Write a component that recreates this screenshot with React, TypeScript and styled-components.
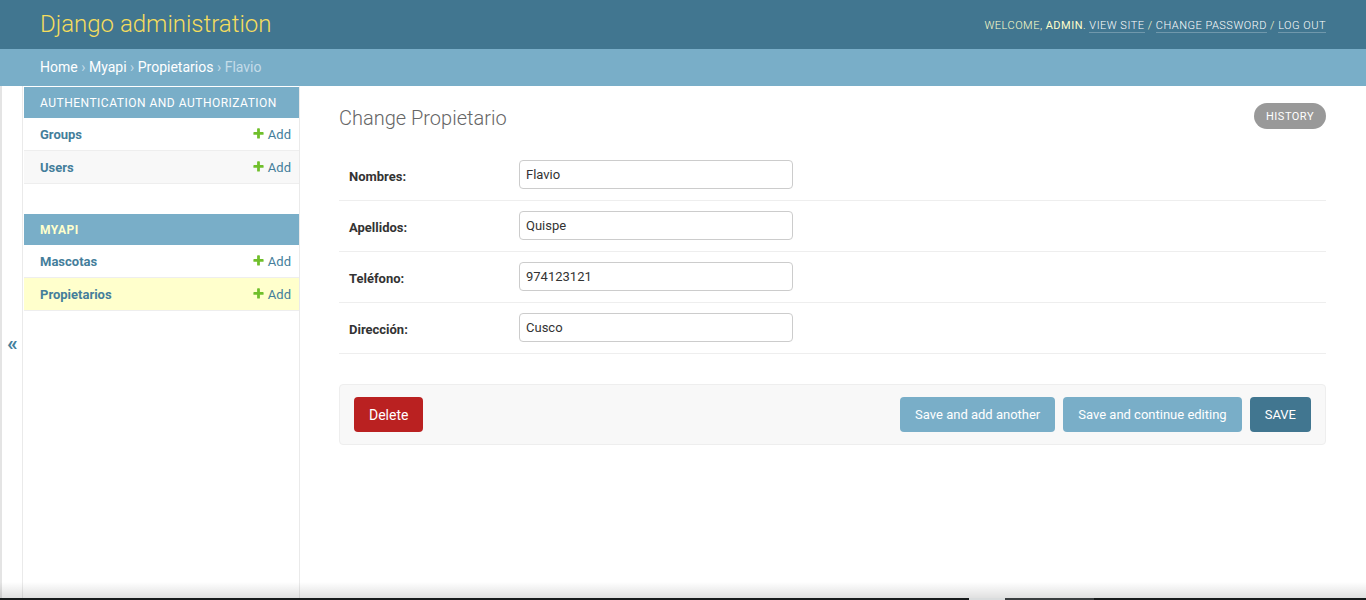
import React from 'react';
import styled, { createGlobalStyle } from 'styled-components';

const GlobalStyle = createGlobalStyle`
  html, body { margin: 0; padding: 0; height: 100%; }
  body {
    font-family: Roboto, "Liberation Sans", Arial, sans-serif;
    color: #333;
    background: #fff;
    font-size: 14px;
  }
  #root { height: 100%; }
  * { box-sizing: border-box; }
`;

const Page = styled.div`
  height: 100vh;
  display: flex;
  flex-direction: column;
  position: relative;
  overflow: hidden;
  &::after {
    content: '';
    position: absolute;
    left: 0;
    right: 0;
    bottom: 2px;
    height: 16px;
    background: linear-gradient(to bottom, rgba(0, 0, 0, 0), rgba(0, 0, 0, 0.12));
    pointer-events: none;
  }
`;

const Header = styled.header`
  flex: 0 0 49px;
  display: flex;
  align-items: center;
  justify-content: space-between;
  padding: 0 40px;
  background: #417690;
  color: #ffc;
`;

const Branding = styled.h1`
  margin: 0;
  font-weight: 300;
  font-size: 24px;
  line-height: 29px;
  color: #f5dd5d;
`;

const UserTools = styled.div`
  font-weight: 300;
  font-size: 11px;
  letter-spacing: 0.5px;
  text-transform: uppercase;
  color: #ffc;
  line-height: 14px;
  padding-top: 3px;
  strong { font-weight: 400; }
`;

const ToolLink = styled.a`
  color: #fff;
  text-decoration: none;
  border-bottom: 1px solid rgba(255, 255, 255, 0.25);
`;

const Breadcrumbs = styled.nav`
  flex: 0 0 37px;
  display: flex;
  align-items: center;
  padding: 0 40px 1px;
  background: #79aec8;
  color: #c4dce8;
  font-size: 14px;
`;

const Crumb = styled.a`
  color: #fff;
  text-decoration: none;
`;

const Sep = styled.span`
  margin: 0 3.5px;
`;

const Main = styled.div`
  flex: 1;
  display: flex;
  min-height: 0;
`;

const Toggle = styled.button`
  flex: 0 0 23px;
  width: 23px;
  border: 0;
  border-left: 2px solid #e4e4e4;
  border-right: 1px solid #eaeaea;
  background: #fff;
  color: #447e9b;
  font-family: inherit;
  font-size: 21px;
  font-weight: 700;
  padding: 2px 0 0 1px;
  display: flex;
  align-items: center;
  justify-content: center;
  cursor: pointer;
`;

const Sidebar = styled.nav`
  flex: 0 0 277px;
  padding-left: 1px;
  border-top: 1px solid transparent;
  border-right: 1px solid #eaeaea;
  background: #fff;
`;

const Module = styled.div`
  margin-bottom: 30px;
`;

const Caption = styled.div<{ $current?: boolean }>`
  height: 31px;
  display: flex;
  align-items: center;
  padding: 0 16px;
  background: #79aec8;
  color: ${(p) => (p.$current ? '#ffc' : '#fff')};
  font-weight: ${(p) => (p.$current ? 700 : 400)};
  font-size: 12px;
  letter-spacing: 0.5px;
  text-transform: uppercase;
`;

const ModelRow = styled.div<{ $bg: string }>`
  height: 33px;
  display: flex;
  align-items: center;
  justify-content: space-between;
  padding: 0 8px 0 16px;
  border-bottom: 1px solid #eee;
  background: ${(p) => p.$bg};
  font-size: 13px;
`;

const ModelName = styled.a`
  color: #447e9b;
  font-weight: 700;
  text-decoration: none;
`;

const AddLink = styled.a`
  display: flex;
  align-items: center;
  gap: 3px;
  color: #447e9b;
  text-decoration: none;
  svg { display: block; margin-top: -1px; }
`;

const Content = styled.main`
  flex: 1;
  padding: 20px 40px 20px 39px;
`;

const ContentHead = styled.div`
  display: flex;
  justify-content: space-between;
  align-items: flex-start;
  margin-bottom: 20px;
`;

const Title = styled.h1`
  margin: 0;
  font-size: 20px;
  font-weight: 300;
  line-height: 24px;
  color: #666;
`;

const HistoryLink = styled.a`
  margin-top: -3px;
  height: 26px;
  padding: 0 12px;
  display: flex;
  align-items: center;
  background: #999;
  color: #fff;
  font-size: 11px;
  letter-spacing: 0.5px;
  text-transform: uppercase;
  border-radius: 15px;
  text-decoration: none;
`;

const FormRow = styled.div`
  display: flex;
  align-items: center;
  padding: 10px 10px 11px;
  border-bottom: 1px solid #eee;
`;

const Label = styled.label`
  flex: 0 0 170px;
  padding-top: 3px;
  font-size: 13px;
  font-weight: 700;
  color: #333;
`;

const Input = styled.input`
  width: 274px;
  height: 29px;
  padding: 0 6px;
  border: 1px solid #ccc;
  border-radius: 4px;
  font-family: Roboto, "Liberation Sans", Arial, sans-serif;
  font-size: 13px;
  color: #333;
  background: #fff;
  outline: none;
`;

const SubmitRow = styled.div`
  margin-top: 30px;
  display: flex;
  align-items: center;
  gap: 8px;
  padding: 12px 14px;
  background: #f8f8f8;
  border: 1px solid #eee;
  border-radius: 4px;
`;

const Button = styled.button<{ $bg: string; $push?: boolean; $size?: number }>`
  height: 35px;
  padding: 0 15px;
  border: 0;
  border-radius: 4px;
  background: ${(p) => p.$bg};
  color: #fff;
  font-family: Roboto, "Liberation Sans", Arial, sans-serif;
  font-size: ${(p) => p.$size ?? 13}px;
  cursor: pointer;
  margin-right: ${(p) => (p.$push ? 'auto' : '0')};
`;

const BottomBar = styled.div`
  flex: 0 0 2px;
  display: flex;
  background: #171b1c;
`;

const BarSpacer = styled.div<{ $w: number; $bg: string }>`
  flex: 0 0 ${(p) => p.$w}px;
  background: ${(p) => p.$bg};
`;

const PlusIcon = () => (
  <svg width="13" height="13" viewBox="0 0 1792 1792" aria-hidden="true">
    <path
      fill="#70bf2b"
      d="M1600 796v192q0 40-28 68t-68 28h-416v416q0 40-28 68t-68 28h-192q-40 0-68-28t-28-68v-416h-416q-40 0-68-28t-28-68v-192q0-40 28-68t68-28h416v-416q0-40 28-68t68-28h192q40 0 68 28t28 68v416h416q40 0 68 28t28 68z"
    />
  </svg>
);

type Model = { name: string; bg: string };
type App_ = { caption: string; current?: boolean; models: Model[] };

const apps: App_[] = [
  {
    caption: 'Authentication and Authorization',
    models: [
      { name: 'Groups', bg: '#fff' },
      { name: 'Users', bg: '#f8f8f8' },
    ],
  },
  {
    caption: 'Myapi',
    current: true,
    models: [
      { name: 'Mascotas', bg: '#fff' },
      { name: 'Propietarios', bg: '#ffc' },
    ],
  },
];

const fields = [
  { label: 'Nombres:', value: 'Flavio' },
  { label: 'Apellidos:', value: 'Quispe' },
  { label: 'Teléfono:', value: '974123121' },
  { label: 'Dirección:', value: 'Cusco' },
];

export default function App() {
  return (
    <>
      <GlobalStyle />
      <Page>
        <Header>
          <Branding>Django administration</Branding>
          <UserTools>
            Welcome, <strong>admin</strong>. <ToolLink href="#">View site</ToolLink> /{' '}
            <ToolLink href="#">Change password</ToolLink> / <ToolLink href="#">Log out</ToolLink>
          </UserTools>
        </Header>
        <Breadcrumbs>
          <Crumb href="#">Home</Crumb>
          <Sep>›</Sep>
          <Crumb href="#">Myapi</Crumb>
          <Sep>›</Sep>
          <Crumb href="#">Propietarios</Crumb>
          <Sep>›</Sep>
          Flavio
        </Breadcrumbs>
        <Main>
          <Toggle>«</Toggle>
          <Sidebar>
            {apps.map((app) => (
              <Module key={app.caption}>
                <Caption $current={app.current}>{app.caption}</Caption>
                {app.models.map((m) => (
                  <ModelRow key={m.name} $bg={m.bg}>
                    <ModelName href="#">{m.name}</ModelName>
                    <AddLink href="#">
                      <PlusIcon />
                      Add
                    </AddLink>
                  </ModelRow>
                ))}
              </Module>
            ))}
          </Sidebar>
          <Content>
            <ContentHead>
              <Title>Change Propietario</Title>
              <HistoryLink href="#">History</HistoryLink>
            </ContentHead>
            {fields.map((f) => (
              <FormRow key={f.label}>
                <Label>{f.label}</Label>
                <Input type="text" defaultValue={f.value} />
              </FormRow>
            ))}
            <SubmitRow>
              <Button $bg="#ba2121" $push $size={14}>Delete</Button>
              <Button $bg="#79aec8">Save and add another</Button>
              <Button $bg="#79aec8">Save and continue editing</Button>
              <Button $bg="#417690">SAVE</Button>
            </SubmitRow>
          </Content>
        </Main>
        <BottomBar>
          <BarSpacer $w={969} $bg="#171b1c" />
          <BarSpacer $w={36} $bg="#d9dcdd" />
          <BarSpacer $w={89} $bg="#3a3e40" />
        </BottomBar>
      </Page>
    </>
  );
}
